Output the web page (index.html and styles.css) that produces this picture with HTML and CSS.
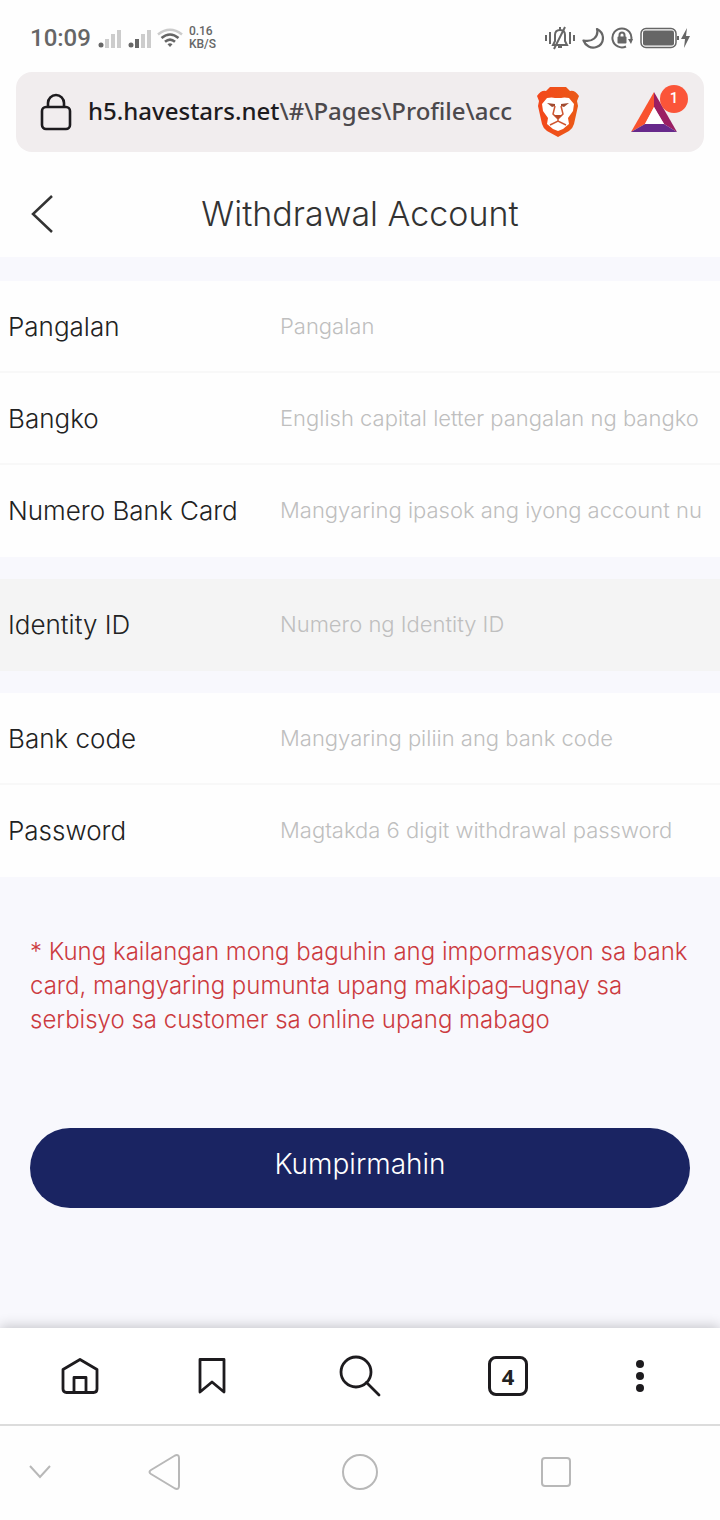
FILE: index.html
```html
<!DOCTYPE html>
<html lang="fil">
<head>
    <meta charset="UTF-8">
    <meta name="viewport" content="width=device-width, initial-scale=1.0">
    <title>Withdrawal Account</title>
    <link rel="stylesheet" href="styles.css">
</head>
<body>
    <!-- Status bar -->
    <div class="status-bar">
        <div class="status-group">
            <span class="clock">10:09</span>
            <svg width="24" height="20" viewBox="0 0 24 20">
                <circle cx="4" cy="17" r="2.5" fill="#666"/>
                <path d="M10 11v9M16 6v14M22 2v18" stroke="#ccc" stroke-width="4"/>
            </svg>
            <svg width="24" height="20" viewBox="0 0 24 20">
                <circle cx="4" cy="17" r="2.5" fill="#666"/>
                <path d="M10 11v9" stroke="#666" stroke-width="4"/>
                <path d="M16 6v14M22 2v18" stroke="#ccc" stroke-width="4"/>
            </svg>
            <svg width="26" height="20" viewBox="0 0 26 20" fill="none" stroke="#666" stroke-width="2.6">
                <path d="M1 6.500Q13 -3 25 6.500" stroke="#ccc"/>
                <path d="M4.500 10Q13 3 21.500 10M8 13.800Q13 9.500 18 13.800"/>
                <path d="M10.500 16.200Q13 14.500 15.500 16.200L13 19z" fill="#666" stroke="none"/>
            </svg>
            <span class="speed">0.16<br>KB/S</span>
        </div>
        <div class="status-group status-right">
            <svg width="30" height="24" viewBox="0 0 30 24" fill="none" stroke="#666" stroke-width="2">
                <path d="M1 9v6M5 6v12M25 6v12M29 9v6"/>
                <path d="M8 19h14l-2-4V9q0-5-5-5t-5 5v6zM15 4V1M13 21h4"/>
                <path d="M20 1L9 23"/>
            </svg>
            <svg width="22" height="22" viewBox="0 0 22 22" fill="none" stroke="#666" stroke-width="2.200" stroke-linejoin="round">
                <path d="M15 2C23 6 23 17 14.500 20C9 22 3.500 19 1.500 13.500C10 15.500 17 10 15 2z"/>
            </svg>
            <svg width="22" height="22" viewBox="0 0 22 22" fill="none" stroke="#666" stroke-width="2">
                <path d="M15 19.500A9.500 9.500 0 1 1 20.200 13"/>
                <path d="M17 12h5l-2 5z" fill="#666" stroke="none"/>
                <rect x="6.500" y="9.500" width="9" height="7" rx="1" fill="#666" stroke="none"/>
                <path d="M8.500 10V8a2.500 2.500 0 0 1 5 0v2"/>
            </svg>
            <svg width="50" height="22" viewBox="0 0 50 22">
                <rect x="1" y="1.500" width="35" height="19" rx="5" fill="none" stroke="#666" stroke-width="1.500"/>
                <rect x="3" y="3.500" width="31" height="15" rx="2" fill="#666"/>
                <path d="M38 9v4" stroke="#666" stroke-width="2"/>
                <path d="M47 1l-6 11h4l-1 9 6-12h-4z" fill="#666"/>
            </svg>
        </div>
    </div>

    <!-- Browser address bar -->
    <div class="address-bar">
        <svg width="32" height="38" viewBox="0 0 32 38" fill="none" stroke="#1d1b1e" stroke-width="2.600">
            <rect x="2" y="14" width="28" height="22" rx="4"/>
            <path d="M8 14V10a8 8 0 0 1 16 0v4"/>
        </svg>
        <a class="url" href="#">h5.havestars.net<span class="url-path">\#\Pages\Profile\acc</span></a>
        <button class="icon-button" type="button" aria-label="Brave Shields">
            <svg width="44" height="52" viewBox="0 0 44 52">
                <defs>
                    <linearGradient id="shield" x1="0" x2="1">
                        <stop offset="0" stop-color="#f4471c"/>
                        <stop offset="1" stop-color="#ea5a16"/>
                    </linearGradient>
                </defs>
                <path d="M14 1h16l4 4q5-1 9 5l-2 5 1 5-4 18q-1 4-5 7l-11 6-11-6q-4-3-5-7L2 20l1-5-2-5q4-6 9-5z" fill="url(#shield)"/>
                <path d="M11 12q5-1 8 0h6q3-1 8 0l5 6-1 7-5 7 1 6-6 5-5 2-5-2-6-5 1-6-5-7-1-7z" fill="#fff"/>
                <path d="M11 17l8 1v2l-3 1zM33 17l-8 1v2l3 1z" fill="#a04a30"/>
                <path d="M19 20l-2 8 5 5 5-5-2-8M22 33v3M14 39l8-4 8 4" fill="none" stroke="#cf5630" stroke-width="1.500"/>
                <path d="M18 29h8l-4 4z" fill="#b84a2a"/>
            </svg>
        </button>
        <button class="icon-button rewards" type="button" aria-label="Brave Rewards">
            <svg width="48" height="42" viewBox="0 0 48 42">
                <path d="M24 1L1 41l14-8 9-17z" fill="#f9532f"/>
                <path d="M24 1l23 40-13-8-10-17z" fill="#9b1f63"/>
                <path d="M1 41h46l-13-8H15z" fill="#67298b"/>
                <path d="M24 16l-9 17h19z" fill="#fff"/>
            </svg>
            <span class="badge">1</span>
        </button>
    </div>

    <header class="page-header">
        <a class="back" href="#" aria-label="Back">
            <svg width="24" height="40" viewBox="0 0 24 40" fill="none" stroke="#333" stroke-width="2.500">
                <path d="M22 2L3 20l19 18"/>
            </svg>
        </a>
        <h1 class="title">Withdrawal Account</h1>
    </header>

    <!-- Account form -->
    <form class="account-form">
        <div class="field-group">
            <div class="field">
                <label for="name">Pangalan</label>
                <input id="name" type="text" placeholder="Pangalan">
            </div>
            <div class="field">
                <label for="bank">Bangko</label>
                <input id="bank" type="text" placeholder="English capital letter pangalan ng bangko">
            </div>
            <div class="field">
                <label for="card">Numero Bank Card</label>
                <input id="card" type="text" placeholder="Mangyaring ipasok ang iyong account number">
            </div>
        </div>
        <div class="field-group muted">
            <div class="field">
                <label for="identity">Identity ID</label>
                <input id="identity" type="text" placeholder="Numero ng Identity ID">
            </div>
        </div>
        <div class="field-group">
            <div class="field">
                <label for="code">Bank code</label>
                <input id="code" type="text" placeholder="Mangyaring piliin ang bank code">
            </div>
            <div class="field">
                <label for="password">Password</label>
                <input id="password" type="password" placeholder="Magtakda 6 digit withdrawal password">
            </div>
        </div>
        <p class="notice">* Kung kailangan mong baguhin ang impormasyon sa bank card, mangyaring pumunta upang makipag–ugnay sa serbisyo sa customer sa online upang mabago</p>
        <button class="submit" type="submit">Kumpirmahin</button>
    </form>

    <!-- Browser toolbar -->
    <nav class="toolbar">
        <button class="icon-button" type="button" aria-label="Home">
            <svg width="40" height="40" viewBox="0 0 40 40" fill="none" stroke="#1d1b1e" stroke-width="2.800" stroke-linejoin="round">
                <path d="M3 13.500L20 3.500l17 10V33q0 3.500-3.500 3.500h-27Q3 36.500 3 33z"/>
                <path d="M14 36V21.500h12V36"/>
            </svg>
        </button>
        <button class="icon-button" type="button" aria-label="Bookmarks">
            <svg width="40" height="40" viewBox="0 0 40 40" fill="none" stroke="#1d1b1e" stroke-width="2.800" stroke-linejoin="round">
                <path d="M8 3.500h24V36L20 26 8 36z"/>
            </svg>
        </button>
        <button class="icon-button" type="button" aria-label="Search">
            <svg width="44" height="44" viewBox="0 0 44 44" fill="none" stroke="#1d1b1e" stroke-width="2.800" stroke-linecap="round">
                <circle cx="18" cy="18" r="15"/>
                <path d="M28.500 28.500L41 41"/>
            </svg>
        </button>
        <button class="tabs" type="button" aria-label="Tabs">4</button>
        <button class="icon-button" type="button" aria-label="Menu">
            <svg width="40" height="40" viewBox="0 0 40 40" fill="#1d1b1e">
                <circle cx="20" cy="8" r="4"/>
                <circle cx="20" cy="20" r="4"/>
                <circle cx="20" cy="32" r="4"/>
            </svg>
        </button>
    </nav>

    <!-- System navigation -->
    <nav class="system-nav">
        <button class="icon-button" type="button" aria-label="Hide">
            <svg width="24" height="40" viewBox="0 0 24 40" fill="none" stroke="#b8b8b8" stroke-width="2">
                <path d="M2 14l10 11 10-11"/>
            </svg>
        </button>
        <button class="icon-button" type="button" aria-label="Back">
            <svg width="40" height="40" viewBox="0 0 40 40" fill="none" stroke="#b8b8b8" stroke-width="2" stroke-linejoin="round">
                <path d="M31 3.500Q35 2 35 6v28q0 4-4 2.500L7 22q-3-2 0-4z"/>
            </svg>
        </button>
        <button class="icon-button" type="button" aria-label="Home screen">
            <svg width="40" height="40" viewBox="0 0 40 40" fill="none" stroke="#b8b8b8" stroke-width="2">
                <circle cx="20" cy="20" r="17"/>
            </svg>
        </button>
        <button class="icon-button" type="button" aria-label="Recent apps">
            <svg width="40" height="40" viewBox="0 0 40 40" fill="none" stroke="#b8b8b8" stroke-width="2">
                <rect x="6" y="6" width="28" height="28" rx="3"/>
            </svg>
        </button>
    </nav>
</body>
</html>
```
FILE: styles.css
```css
* {
    box-sizing: border-box;
}

body {
    margin: 0;
    min-height: 100vh;
    display: flex;
    flex-direction: column;
    font-family: Inter, "Liberation Sans", sans-serif;
    font-weight: 300;
    background-color: #fefefe;
    color: #222;
}

svg {
    display: block;
    flex: none;
}

button {
    padding: 0;
    border: 0;
    background: none;
    color: inherit;
    font-family: inherit;
    cursor: pointer;
}

/* Status bar */
.status-bar {
    display: flex;
    justify-content: space-between;
    align-items: center;
    height: 72px;
    padding: 4px 30px 0;
    font-family: Roboto, sans-serif;
    color: #666;
}

.status-group {
    display: flex;
    align-items: center;
    gap: 6px;
}

.status-right {
    gap: 7px;
}

.clock {
    font-size: 24px;
    font-weight: 500;
}

.speed {
    font-size: 12px;
    font-weight: 500;
    line-height: 13px;
}

/* Address bar */
.address-bar {
    display: flex;
    align-items: center;
    height: 80px;
    margin: 0 16px;
    padding: 0 16px 0 24px;
    border-radius: 16px;
    background-color: #f1edee;
}

.url {
    flex: 1;
    margin: 0 24px 0 16px;
    padding-bottom: 4px;
    overflow: hidden;
    white-space: nowrap;
    font-family: "Noto Sans", sans-serif;
    font-size: 24px;
    font-weight: 500;
    color: #1d1b1e;
    text-decoration: none;
}

.url-path {
    color: #4c494c;
}

.rewards {
    position: relative;
    margin-left: 50px;
    margin-right: 10px;
}

.badge {
    position: absolute;
    top: -6px;
    right: -10px;
    width: 28px;
    height: 28px;
    border-radius: 50%;
    background-color: #fb5539;
    color: #fff;
    font-family: Roboto, sans-serif;
    font-size: 15px;
    font-weight: 500;
    line-height: 26px;
}

/* Page header */
.page-header {
    display: grid;
    grid-template-columns: 24px 1fr 24px;
    align-items: center;
    height: 105px;
    padding: 18px 30px 0;
}

.title {
    margin: 0;
    font-size: 34px;
    font-weight: 300;
    text-align: center;
    color: #333;
}

/* Form */
.account-form {
    flex: 1;
    display: flex;
    flex-direction: column;
    padding-top: 24px;
    background-color: #f8f8fd;
}

.field-group {
    margin-bottom: 22px;
    background-color: #fefefe;
}

.muted {
    background-color: #f4f4f4;
}

.field {
    display: flex;
    align-items: center;
    height: 92px;
    padding: 0 18px 0 8px;
    border-bottom: 2px solid #f8f8f8;
}

.field:last-child {
    border-bottom-color: transparent;
}

.field label {
    width: 272px;
    font-size: 26px;
}

.field input {
    flex: 1;
    min-width: 0;
    padding: 0;
    border: 0;
    outline: 0;
    background: none;
    font-family: inherit;
    font-size: 22px;
    font-weight: 300;
}

.field input::placeholder {
    color: #bfbfbf;
}

.notice {
    margin: 36px 30px 91px;
    font-size: 24px;
    line-height: 34px;
    color: #cc3b3f;
}

.submit {
    height: 80px;
    margin: 0 30px 118px;
    padding-bottom: 8px;
    border-radius: 40px;
    background-color: #1a2462;
    color: #fff;
    font-size: 28px;
    font-weight: 300;
}

/* Browser toolbar */
.toolbar {
    position: relative;
    display: grid;
    grid-template-columns: 29fr 37fr 37fr 37fr 29fr;
    align-items: center;
    justify-items: center;
    height: 98px;
    padding: 0 22px;
    border-bottom: 2px solid #dcdcdc;
    background-color: #fff;
    box-shadow: 0 -2px 12px rgba(0, 0, 0, 0.2);
}

.tabs {
    width: 40px;
    height: 40px;
    border: 3px solid #1d1b1e;
    border-radius: 8px;
    font-family: "Noto Sans", sans-serif;
    font-size: 22px;
    font-weight: 700;
    line-height: 34px;
}

/* System navigation */
.system-nav {
    display: grid;
    grid-template-columns: 52px 1fr 1fr 1fr;
    align-items: center;
    justify-items: center;
    height: 94px;
    padding: 0 66px 2px 14px;
    background-color: #fefefe;
}

.system-nav {
    position: relative;
}
```
